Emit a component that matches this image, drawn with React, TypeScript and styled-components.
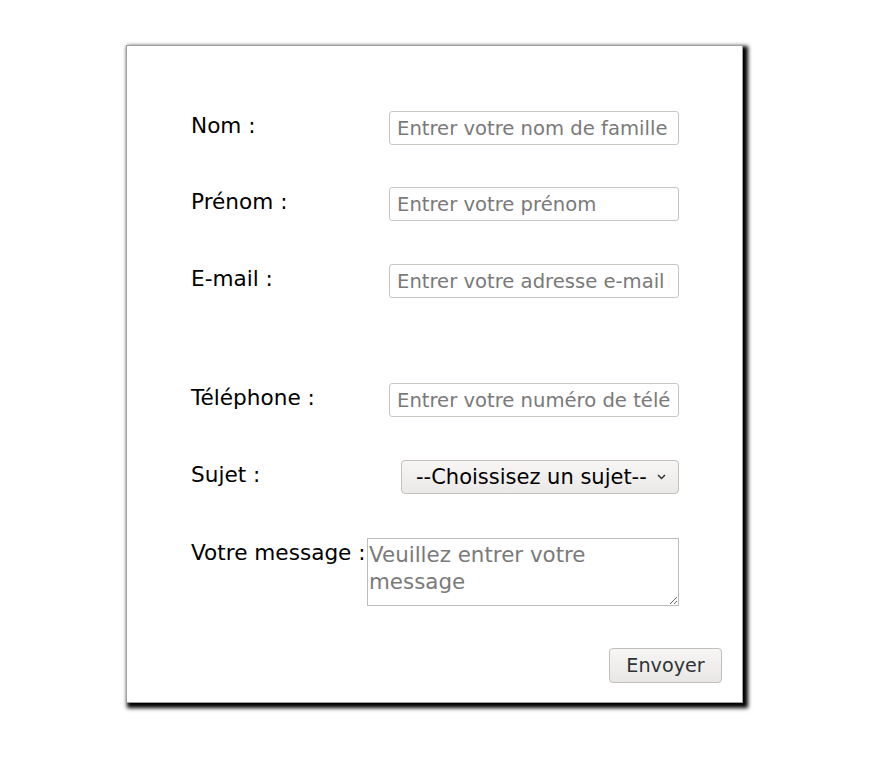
import React from "react";
import styled, { createGlobalStyle } from "styled-components";

const Global = createGlobalStyle`
  html, body { background: #ffffff; }
  body {
    margin: 8px;
    font-family: "DejaVu Sans", Verdana, sans-serif;
  }
`;

const Page = styled.div`
  padding: 37px 0 40px 118px;
`;

const Card = styled.form`
  box-sizing: border-box;
  width: 617px;
  height: 658px;
  padding: 65px 21px 0 65px;
  background: #ffffff;
  border: 1px solid #a0a0a0;
  box-shadow: 3px 3px 4px 2px #000000;
  display: flex;
  flex-direction: column;
`;

const Row = styled.div<{ $gap?: number }>`
  display: flex;
  justify-content: space-between;
  align-items: flex-start;
  margin-right: 42px;
  margin-bottom: ${(p) => p.$gap ?? 42}px;
`;

const Label = styled.label`
  font-size: 21.6px;
  line-height: 24px;
  color: #000000;
  padding-top: 3px;
  margin-left: -1px;
  white-space: nowrap;
`;

const fieldFont = `
  font-family: "DejaVu Sans", Verdana, sans-serif;
`;

const TextInput = styled.input`
  ${fieldFont}
  font-size: 19.6px;
  box-sizing: border-box;
  width: 290px;
  height: 34px;
  padding: 4px 7px;
  border: 1px solid #c9c5c1;
  border-radius: 3px;
  color: #000;
  background: #fff;
  outline: none;
  &::placeholder { color: #7a7a7a; }
`;

const SelectBox = styled.div`
  position: relative;
  width: 278px;
  height: 34px;
`;

const Select = styled.select`
  ${fieldFont}
  font-size: 21px;
  appearance: none;
  box-sizing: border-box;
  width: 100%;
  height: 100%;
  padding: 0 0 0 14px;
  border: 1px solid #c4c0bc;
  border-radius: 4px;
  background: linear-gradient(#f7f6f5, #ebe9e7);
  color: #000;
  outline: none;
`;

const Chevron = styled.svg`
  position: absolute;
  right: 13px;
  top: 14px;
  width: 9px;
  height: 6px;
  pointer-events: none;
`;

const TextArea = styled.textarea`
  ${fieldFont}
  font-size: 21.4px;
  line-height: 27px;
  box-sizing: border-box;
  width: 312px;
  height: 68px;
  padding: 2px 1px;
  border: 1px solid #c0bcb8;
  border-radius: 0;
  resize: both;
  outline: none;
  &::placeholder { color: #7a7a7a; }
`;

const Actions = styled.div`
  display: flex;
  justify-content: flex-end;
  margin-right: -1px;
`;

const Button = styled.button`
  ${fieldFont}
  font-size: 19.2px;
  box-sizing: border-box;
  width: 113px;
  height: 35px;
  padding: 0;
  border: 1px solid #c2beba;
  border-radius: 4px;
  background: linear-gradient(#f7f6f5, #e9e7e5);
  color: #2e3436;
`;

export default function App() {
  return (
    <>
      <Global />
      <Page>
        <Card onSubmit={(e) => e.preventDefault()}>
          <Row>
            <Label htmlFor="nom">Nom :</Label>
            <TextInput id="nom" placeholder="Entrer votre nom de famille" />
          </Row>
          <Row $gap={43}>
            <Label htmlFor="prenom">Prénom :</Label>
            <TextInput id="prenom" placeholder="Entrer votre prénom" />
          </Row>
          <Row $gap={85}>
            <Label htmlFor="email">E-mail :</Label>
            <TextInput id="email" placeholder="Entrer votre adresse e-mail" />
          </Row>
          <Row $gap={43}>
            <Label htmlFor="tel">Téléphone :</Label>
            <TextInput id="tel" placeholder="Entrer votre numéro de téléphone" />
          </Row>
          <Row $gap={44}>
            <Label htmlFor="sujet">Sujet :</Label>
            <SelectBox>
              <Select id="sujet" defaultValue="">
                <option value="">--Choissisez un sujet--</option>
              </Select>
              <Chevron viewBox="0 0 9 6">
                <path d="M1 1 L4.5 4.5 L8 1" fill="none" stroke="#2e3436" strokeWidth="1.5" />
              </Chevron>
            </SelectBox>
          </Row>
          <Row $gap={42}>
            <Label htmlFor="msg">Votre message :</Label>
            <TextArea id="msg" placeholder="Veuillez entrer votre message" />
          </Row>
          <Actions>
            <Button type="submit">Envoyer</Button>
          </Actions>
        </Card>
      </Page>
    </>
  );
}
